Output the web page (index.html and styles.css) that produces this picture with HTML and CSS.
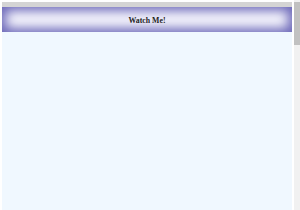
FILE: index.html
```html
<!DOCTYPE html>
<html lang="en">
<head>
    <meta charset="UTF-8">
    <meta name="viewport" content="width=device-width, initial-scale=1.0">
    <title>Watch Me</title>
    <link rel="stylesheet" href="styles.css">
</head>
<body>
    <div class="top-strip"></div>
    <div class="banner">
        <h1>Watch Me!</h1>
    </div>
    <div class="content"></div>

    <!-- scrollbar drawn by hand, the window has one in the original -->
    <div class="scrollbar">
        <div class="scrollbar-thumb"></div>
    </div>
</body>
</html>
```

FILE: styles.css
```css
html {
    background-color: white;
}
body {
    margin: 2px 8px 0 2px;
    background-color: #f0f8ff;
    font-family: "Liberation Serif", "Times New Roman", serif;
    color: #222;
}
.top-strip {
    height: 5px;
    background-color: #d4d4d4;
}
.banner {
    height: 25px;
    display: flex;
    align-items: center;
    justify-content: center;
    background-color: #fbfbff;
    box-shadow: inset 0 0 12px 4px #6a66b8;
}
.banner h1 {
    margin: 0;
    padding-top: 2px;
    font-size: 7.8px;
    font-weight: bold;
}
.content {
    height: 178px;
}
.scrollbar {
    position: fixed;
    top: 0;
    right: 0;
    width: 6px;
    height: 100%;
    background-color: #f1f1f1;
}
.scrollbar-thumb {
    margin-top: 2px;
    height: 43px;
    background-color: #c1c1c1;
}
```
